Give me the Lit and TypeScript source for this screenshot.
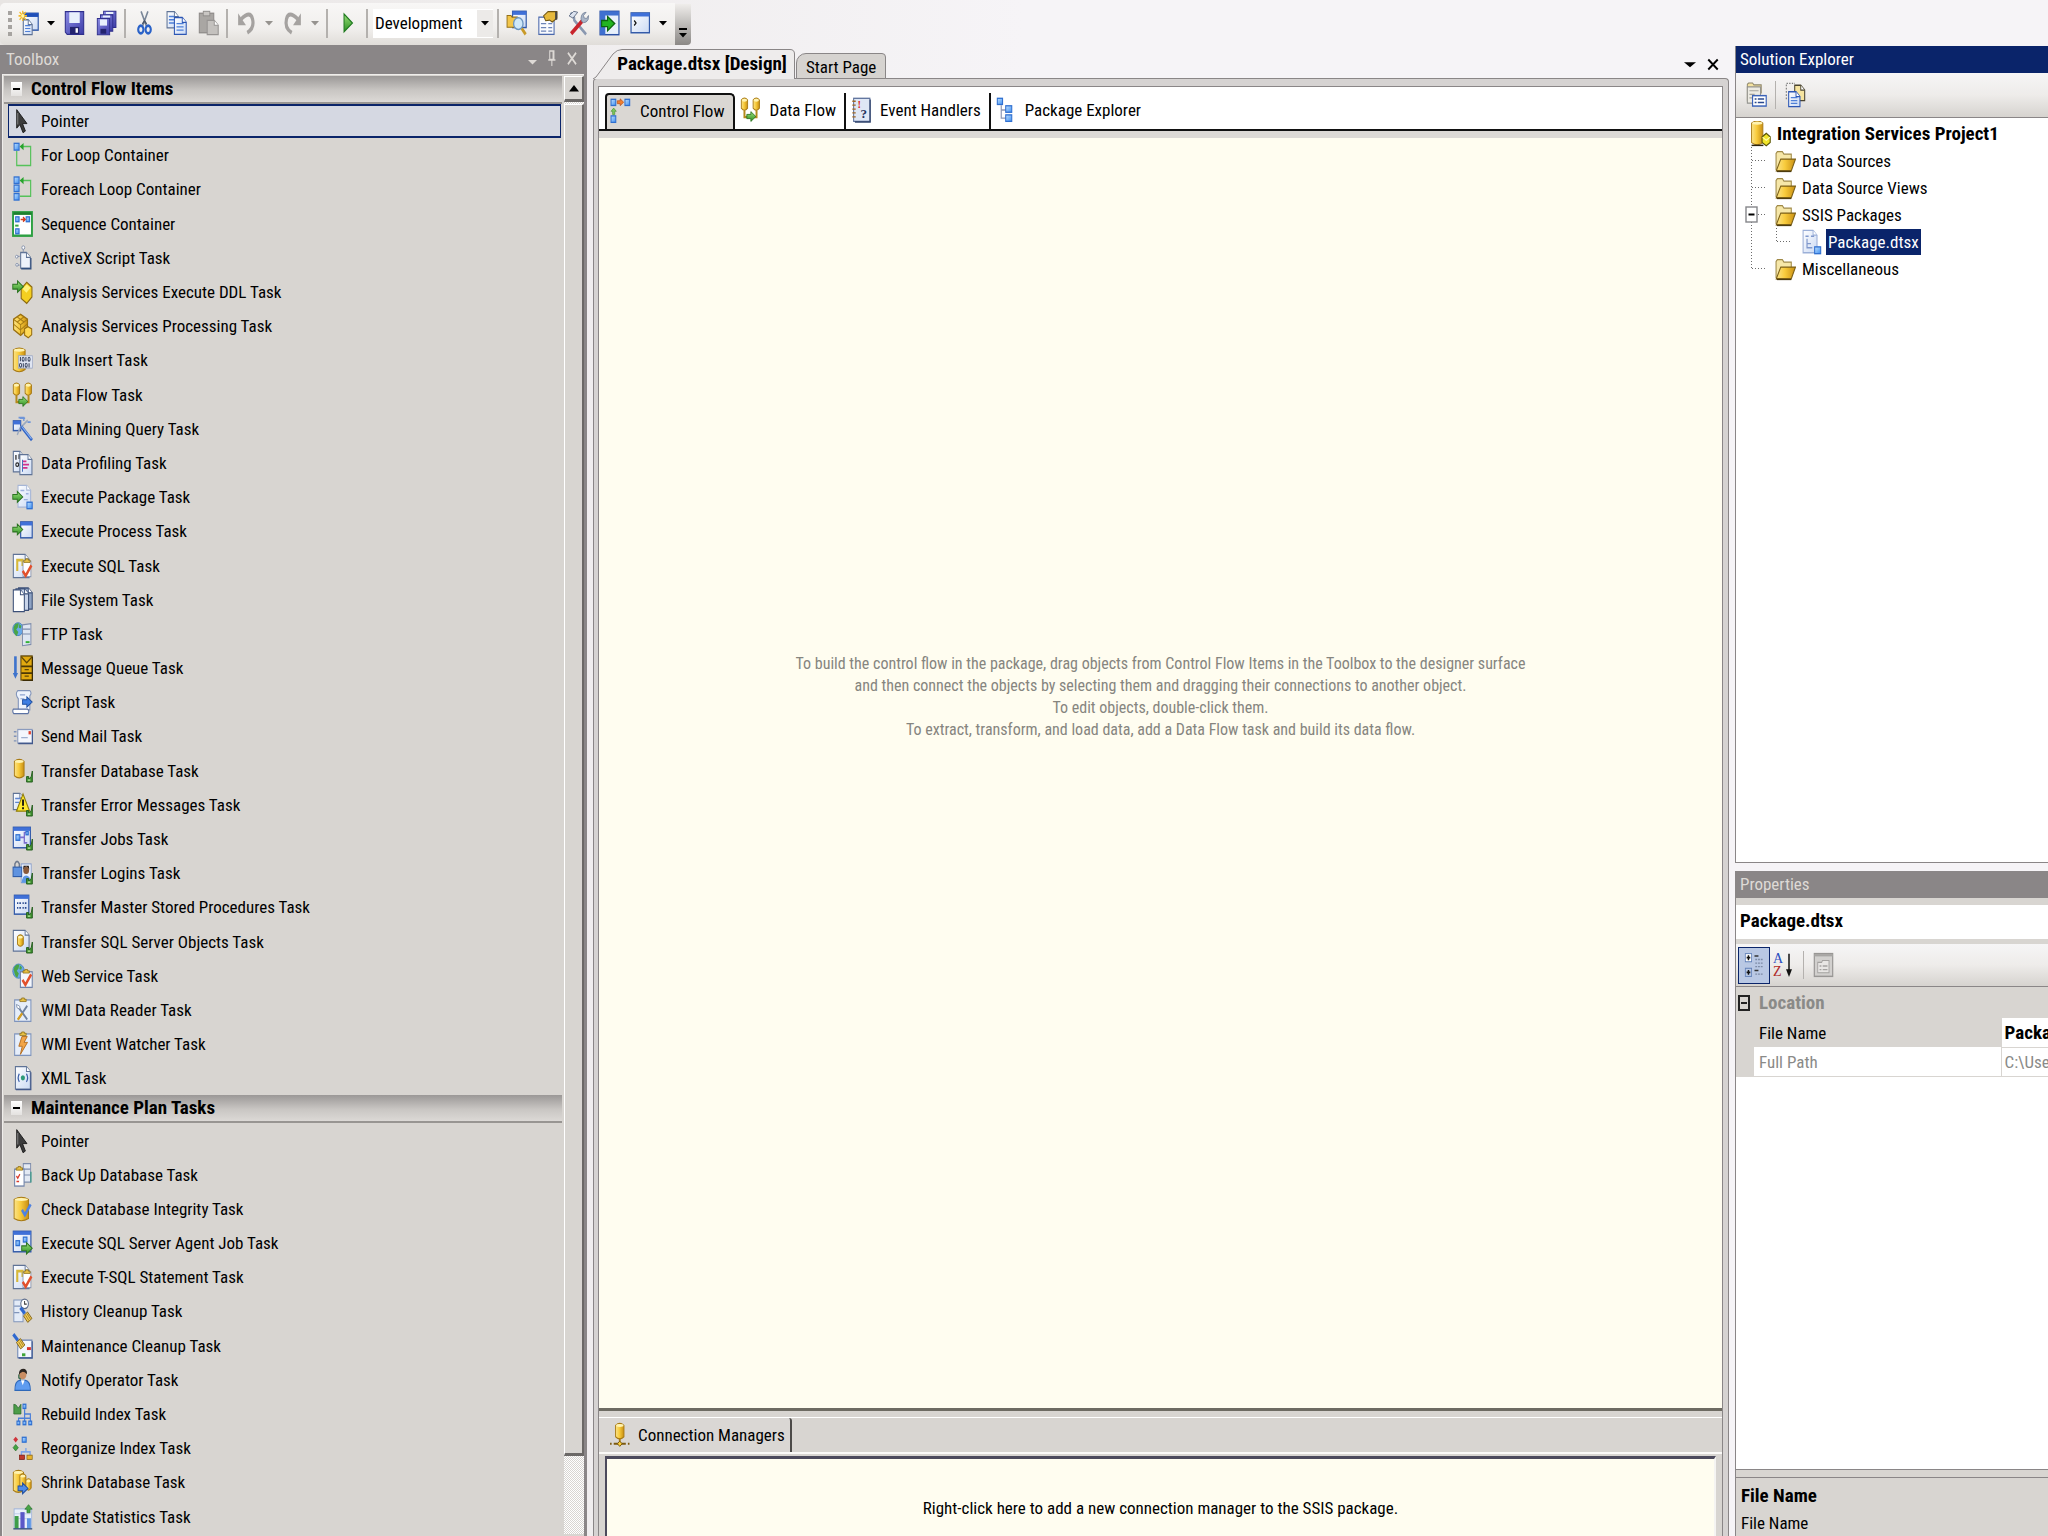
import { LitElement, html, css, svg, nothing } from 'lit';
import { customElement, property, state } from 'lit/decorators.js';
import { classMap } from 'lit/directives/class-map.js';

/* ---------- icon building blocks, drawn on a 16 x 16 grid ---------- */

const page = (x: number, y: number, w: number, h: number, fill = 'url(#paper)', edge = '#5f7396') => svg`
  <path d="M${x} ${y}h${w - 3}l3 3v${h - 3}h${-w}z" fill=${fill} stroke=${edge} stroke-width=".8"/>
  <path d="M${x + w - 3} ${y}v3h3" fill="#fff" stroke=${edge} stroke-width=".7"/>`;
const cyl = (x: number, y: number, w: number, h: number) => svg`
  <path d="M${x} ${y + 1.3}q${w / 2} -2.6 ${w} 0v${h - 2.6}q${-w / 2} 2.6 ${-w} 0z" fill="url(#gold)" stroke="#a87a14" stroke-width=".7"/>
  <ellipse cx=${x + w / 2} cy=${y + 1.4} rx=${w / 2 - 0.4} ry=".9" fill="#fff3b0"/>`;
const goArrow = (x: number, y: number, s = 1, fill = 'url(#green)', edge = '#2b7320') => svg`
  <path transform="translate(${x} ${y}) scale(${s})" d="M0 2h3.6v-2l4.4 3.5-4.4 3.5v-2h-3.6z" fill=${fill} stroke=${edge} stroke-width=".7"/>`;
const box = (x: number, y: number, w = 4, h = 4) => svg`
  <rect x=${x} y=${y} width=${w} height=${h} fill="url(#blue)" stroke="#2f6fd0" stroke-width=".8"/>`;
const tick = (x: number, y: number, c: string) => svg`
  <path d="M${x} ${y}l2.2 3 4.4-6.4" fill="none" stroke=${c} stroke-width="1.8"/>`;
const win = (x: number, y: number, w: number, h: number) => svg`
  <rect x=${x} y=${y} width=${w} height=${h} fill="url(#paper)" stroke="#3159a8" stroke-width=".9"/>
  <rect x=${x} y=${y} width=${w} height="2.2" fill="#3f70d8"/>`;
const moved = svg`
  <path d="M15.5 8v6.8h-4.4v-3.4h1.6v1.6l2-1.6z" fill="#3f8f30" stroke="#1f5a18" stroke-width=".6"/>
  <path d="M12 13.6h2" stroke="#b8ecA0" stroke-width=".8"/>`;
const clip = (x: number, y: number) => svg`
  <path d="M${x} ${y + 2.2}v-1.4l1.4 0v-.8h2v.8h1.4v1.4z" fill="#e7c045" stroke="#8a6a10" stroke-width=".5"/>`;
const brush = (x: number, y: number) => svg`
  <path d="M${x} ${y}l3.4 3.6" stroke="#2e68cf" stroke-width="2.2"/>
  <path d="M${x + 2.4} ${y + 5}l3-2.4 3.4 4-3.2 2.4z" fill="#f4cf58" stroke="#7a5a10" stroke-width=".6"/>
  <path d="M${x + 4} ${y + 4.6}l2.6 3.4M${x + 5} ${y + 3.6}l2.6 3.4" stroke="#8d6a18" stroke-width=".5"/>`;
const globe = (x: number, y: number, r: number) => svg`
  <circle cx=${x} cy=${y} r=${r} fill="#6aa8e8" stroke="#3a76b8" stroke-width=".5"/>
  <path d="M${x - r + 0.6} ${y - 1}q1-${r - 1} ${r} -${r - 1.4}l-.6 2.4-1.4 1.4 1.6 1.6-1.2 2.6q-2-1-2.4-4z" fill="#4aa546"/>
  <path d="M${x + 1} ${y - r + 0.8}l1.6 1.2-.6 1.6-1.4-.4z" fill="#4aa546"/>`;
const folder = svg`
  <path d="M.8 13.6V3.4l1-1.2h3.8l1.2 1.6h5.6v3.2" fill="#f6e7a8" stroke="#a08a48" stroke-width=".8"/>
  <path d="M1 14l3.4-7.2h11.2L12.4 14z" fill="url(#gold)" stroke="#7c6018" stroke-width=".8"/>
  <path d="M1.4 14.5h11" stroke="#4c3c10" stroke-width=".7"/>`;
const taskClip = svg`
  ${page(1, 0.8, 12, 14.4)}
  <path d="M4 11V4.4h4V8" fill="none" stroke="#d6b83a" stroke-width="1.6"/>
  <rect x="8.4" y="5" width="6" height="9.6" fill="#fff" stroke="#7d8cab" stroke-width=".6"/>
  ${clip(9, 3.6)}
  ${tick(8.2, 11, '#e2502c')}`;
const flowPair = svg`
  ${cyl(1, 0.6, 4.8, 7.6)}${cyl(10, 0.6, 4.8, 7.6)}
  <path d="M3.4 8.4v4h4M12.6 8.4v4h-2" fill="none" stroke="#b48a1c" stroke-width="1.5"/>
  ${goArrow(5.2, 9, 0.86)}`;

const drawings: Record<string, unknown> = {
  pointer: svg`<path d="M3.6 1v11.4l2.4-2.2 2.4 5 1.8-1-2.2-4.6h3.4z" fill="#3c3c3c" stroke="#151515" stroke-width=".6"/><path d="M4.4 3v7.2" stroke="#8a8a8a" stroke-width=".7"/>`,
  forLoop: svg`<path d="M3.6 5.6v8.8h10.6V2.8H8" fill="none" stroke="#55c25a" stroke-width=".9"/>${box(1.6, 0.8, 3.8, 4.2)}<path d="M5.8 2.8l3-2.2v4.4z" fill="#27a32c"/>`,
  forEach: svg`<path d="M6 12.4h8.2V2.8H8" fill="none" stroke="#55c25a" stroke-width=".9"/>${box(1.6, 0.6, 3.8, 4)}${box(1.6, 5.6, 3.8, 4)}${box(1.6, 10.8, 3.8, 4)}<path d="M5.8 2.8l3-2.2v4.4z" fill="#27a32c"/>`,
  sequence: svg`<rect x=".8" y=".8" width="14.4" height="14.4" fill="#fff" stroke="#2ea043" stroke-width="1.5"/><path d="M1 1.6h14" stroke="#1d7f2e" stroke-width="1.6"/>${box(2.8, 3.6, 2.6, 3)}${box(10.8, 3.6, 2.6, 3)}${box(2.8, 11, 2.6, 3)}<path d="M6.6 5.2h2.6M8.4 3.8l1.6 1.4-1.6 1.4" stroke="#d23c1e" stroke-width="1" fill="none"/><path d="M2.4 9h2.6" stroke="#3aa53f" stroke-width="1.2"/>`,
  activex: svg`${page(6.6, 4.6, 7.4, 9.6, '#eef3fb')}<path d="M8.6 4.4V1M3.2 7h2.6M3.2 12.4h2.6" stroke="#8b97ae" stroke-width=".8"/><circle cx="8.6" cy="1.6" r="1.1" fill="#fff" stroke="#7c8aa5" stroke-width=".6"/><circle cx="3.6" cy="7.2" r=".9" fill="#fff" stroke="#7c8aa5" stroke-width=".6"/><circle cx="3.8" cy="12.2" r=".9" fill="#fff" stroke="#7c8aa5" stroke-width=".6"/><path d="M14.4 8v6.6H7" stroke="#33507e" stroke-width=".9" fill="none"/>`,
  asDdl: svg`<path d="M11.2 2l4 3v6l-4 4-4.2-3V6z" fill="#f4cf20" stroke="#8c6a10" stroke-width=".8"/><path d="M8 6l3.2-2.6 3 2-3.2 3z" fill="#fff27a"/>${goArrow(0.6, 1.2, 1)}`,
  asProc: svg`<path d="M6.6.8l5.2 3v6l-5.2 4-5.4-3.6V3.8z" fill="url(#gold)" stroke="#9a7010" stroke-width=".9"/><path d="M1.4 4l5.2 3.2L11.6 4M6.6 7v6.4M1.4 7l5 3.4 5.2-3.6M4 2.4l5 3M9 2.4L4 5.6" stroke="#a77c14" stroke-width=".7" fill="none"/><path d="M9.6 9.6l2.6-1.2 2.8 1.4v3.6l-2.6 1.8-2.8-1.6z" fill="#ffd957" stroke="#9a7010" stroke-width=".8"/>`,
  bulk: svg`${cyl(1, 0.6, 9, 14.6)}<rect x="5" y="5.4" width="10.6" height="7.6" fill="#dfe5f2" stroke="#98a5c2" stroke-width=".5"/><path d="M6.4 6.2v2.6M10.6 6.2v2.6M8.6 10v2.6M13 10v2.6" stroke="#38445e" stroke-width=".8"/><g fill="none" stroke="#38445e" stroke-width=".7"><ellipse cx="8.5" cy="7.5" rx=".8" ry="1.2"/><ellipse cx="13" cy="7.5" rx=".8" ry="1.2"/><ellipse cx="6.5" cy="11.2" rx=".8" ry="1.2"/><ellipse cx="10.8" cy="11.2" rx=".8" ry="1.2"/></g>`,
  dataFlow: flowPair,
  mining: svg`${win(1, 3, 5.6, 6)}<path d="M6 1.4h4M5 1h4v2M11.8 3.8h2.4" stroke="#6f95d8" stroke-width="1" fill="none"/><path d="M4 11.6l2-4 6-5" stroke="#9ba9bf" stroke-width="1.1" fill="none"/><path d="M7 6.4l8.2 8.4" stroke="#2f62c4" stroke-width="2"/><path d="M7.4 6.4l7.4 7.6" stroke="#8fb4f0" stroke-width=".7"/>`,
  profiling: svg`${page(1, 0.8, 8, 12.6)}<path d="M3 3v3M5.4 2.6v3" stroke="#222" stroke-width=".9"/><circle cx="4" cy="9" r="1.1" fill="none" stroke="#222" stroke-width=".8"/>${page(6, 2.8, 9.2, 12.4)}<path d="M8 6v7.4" stroke="#3a66b8" stroke-width=".7"/><path d="M8.4 7h2.6M8.4 9h4.6M8.4 11h3.4" stroke="#d2308c" stroke-width="1.1"/>`,
  execPackage: svg`${page(4.6, 0.8, 9.6, 13.4, 'url(#paper)', '#a6b6d6')}<path d="M6.4 4h3M10.6 6h2M9 9.6h3" stroke="#9cb0dc" stroke-width=".8"/>${box(11.4, 11.2, 4, 4)}${goArrow(0.6, 4.6, 0.95)}`,
  execProcess: svg`${win(6.6, 2.4, 8.8, 9.8)}${goArrow(0.6, 3.8, 0.95)}`,
  taskClip,
  files: svg`${page(5, 0.6, 10.4, 13, '#8fa3c4', '#3c5078')}${page(3, 1.2, 9.6, 13.2, '#c9d5ea', '#3c5078')}${page(1, 1.8, 8.4, 13.4, '#fff', '#3c5078')}`,
  ftp: svg`${globe(4.6, 5, 4)}<path d="M8 2.4l6.4-.8v12.8l-6.4.8z" fill="#dfe6f2" stroke="#7d8cab" stroke-width=".7"/><path d="M8 5h6M8 8h6" stroke="#7d8cab" stroke-width=".7"/><path d="M10.4 13h3" stroke="#35b335" stroke-width="1.2"/>`,
  queue: svg`<path d="M2.6.8v11" stroke="#3f74cc" stroke-width="2"/><path d="M.6 11h4l-2 3.6z" fill="#3f74cc"/><rect x="6.8" y=".6" width="8.6" height="14.8" fill="#e1a90f" stroke="#5f4607" stroke-width=".8"/><path d="M7 7h8.4M7 11.2h8.4" stroke="#4c3805" stroke-width="1.1"/><path d="M7.2 1.2l4 3.6 4-3.6M9.6 9h3.2M9.6 13h3.2" stroke="#5f4607" stroke-width=".9" fill="none"/><path d="M15.6 1v14.6H8" stroke="#3c2c04" stroke-width=".8" fill="none"/>`,
  script: svg`<path d="M4.4 1h9.2q1.8 1.6 0 3.2v8.6H4.8V6Q2 3 4.4 1z" fill="#eef3fc" stroke="#7f92b8" stroke-width=".8"/><path d="M1 12.4h11q1.6 1.4 0 2.8H1.4q-1.4-1.2-.4-2.8z" fill="#fff" stroke="#5c73a4" stroke-width=".8"/><path d="M6 3.6h4M6.4 6h3" stroke="#8ea4d0" stroke-width=".7"/>${goArrow(8, 4.8, 0.92, '#3f7fe4', '#1f4fa0')}`,
  mail: svg`<rect x="4.4" y="4" width="11" height="8.4" fill="#f4f7fd" stroke="#8b9bbd" stroke-width=".8"/><path d="M4.8 12.6h10.8V4.4" stroke="#42598c" stroke-width=".9" fill="none"/><rect x="12.6" y="5" width="1.8" height="2" fill="#e0402c"/><path d="M7 9h5" stroke="#9fb0d0" stroke-width=".8"/><path d="M1.4 5.4h2M1.4 8.2h2M1.4 11h2" stroke="#7f92b8" stroke-width=".9"/>`,
  xDatabase: svg`${cyl(1.8, 0.8, 7.4, 11.4)}${moved}`,
  xErrors: svg`${page(1, 0.8, 8, 10)}<path d="M2.4 4h4M2.4 6.4h3" stroke="#5f86d0" stroke-width=".8"/><path d="M8.4 1.2l5 10.600H3.400z" fill="#ffe92e" stroke="#8f7c08" stroke-width=".8"/><path d="M8.400 4.600v3.800M8.400 9.400v1.200" stroke="#111" stroke-width="1.4"/>${moved}`,
  xJobs: svg`${win(1, 0.8, 13, 12.6)}${box(3, 5.4, 3, 3.4)}<path d="M6 7h3.4M11.6 4H9.4v6.4h2.2" fill="none" stroke="#7a6fd0" stroke-width="1"/>${box(10.6, 3.4, 1.8, 2)}${moved}`,
  xLogins: svg`<rect x="7" y="2.4" width="7.6" height="11.6" fill="#eaf1fc" stroke="#8098c8" stroke-width=".6"/><circle cx="10.8" cy="6.4" r="2.2" fill="#8a5a3a"/><path d="M8.4 6q2.4-4 4.8 0l-.4-2.4h-4z" fill="#2a1c14"/><path d="M7.4 14q.4-4.4 3.4-4.4t3.6 4.4z" fill="#5d98e6"/><path d="M2.2 4.4V2.4q1.6-3.2 3.4 0v2" fill="none" stroke="#6f7a8c" stroke-width="1.1"/><rect x=".8" y="4.4" width="6.6" height="5.8" fill="#5f93e0" stroke="#2f5ca8" stroke-width=".7"/>${moved}`,
  xProcs: svg`${win(1.8, 0.8, 11, 11.6)}<path d="M3.8 5.6h3M8 5.6h3M3.8 8.6h3M8 8.6h3" stroke="#2a4a90" stroke-width="1.1" stroke-dasharray="1 .8 3 .6"/>${moved}`,
  xObjects: svg`${page(1, 0.8, 12, 12.8)}${cyl(4.2, 3.6, 4.4, 7)}${moved}`,
  web: svg`${globe(5, 5, 4.4)}<rect x="6.4" y="5.4" width="9" height="9.6" fill="#f4f7fd" stroke="#6f82a8" stroke-width=".8"/>${clip(8.4, 4)}${tick(8, 10.4, '#e2502c')}`,
  wmiRead: svg`<rect x="2" y="1.8" width="12.4" height="13.2" fill="#e6eefa" stroke="#7f94bc" stroke-width=".8"/>${clip(6, 0.6)}<path d="M4 5.4l7.6 8.4M11.6 5.4l-7 8.4" stroke="#6f82a0" stroke-width="1.3"/><path d="M4.4 14l3.4-4" stroke="#d8a020" stroke-width="1.6"/><path d="M3.4 4.6l2.4 1 .4 2-2.4-1z" fill="#fff" stroke="#6f82a0" stroke-width=".5"/>`,
  wmiWatch: svg`<rect x="2" y="1.8" width="12.4" height="13.2" fill="#e6eefa" stroke="#7f94bc" stroke-width=".8"/>${clip(6, 0.6)}<path d="M7.6 3.4h4l-2.4 3.6h2.6L6.4 14.4l1.4-5H5.2z" fill="#f2a548" stroke="#b06a1c" stroke-width=".6"/>`,
  xml: svg`${page(2.6, 1, 11.4, 13.8)}<path d="M14.4 4.4v10.8H3" stroke="#42598c" stroke-width=".8" fill="none"/><path d="M5.6 5.4Q3.8 7.8 5.6 10.4M11 5.4Q12.8 7.8 11 10.4" fill="none" stroke="#3b5fa8" stroke-width=".9"/><circle cx="8.3" cy="7.9" r="1.6" fill="#2c9a78"/>`,
  backup: svg`<path d="M8.6 1h5.6v11.4H8.6z" fill="#e3e9f3" stroke="#7d8cab" stroke-width=".7"/><path d="M9 4.4h5M9 8h5" stroke="#7d8cab" stroke-width=".7"/><path d="M14.4 6v6.6" stroke="#3f9a8a" stroke-width="1"/><rect x="2" y="4.4" width="7.2" height="10.4" fill="#fff" stroke="#6f82a8" stroke-width=".8"/>${clip(3.2, 2.8)}<path d="M3.4 8.6l1 1.4 1.6-2.6M3.4 12h2" fill="none" stroke="#d83a2a" stroke-width=".9"/>`,
  checkDb: svg`${cyl(1.6, 0.8, 11, 14.4)}${tick(7.6, 8.6, '#4f82e0')}`,
  agentJob: svg`${win(1, 0.8, 13.4, 12.6)}${box(3, 6.6, 2.8, 3)}${box(8.6, 4.4, 2.8, 3)}${goArrow(7.4, 7.8, 1)}`,
  history: svg`<path d="M1.4 1.2h7v13.4h-7z" fill="#e3ebf7" stroke="#8095bb" stroke-width=".7"/><path d="M1.6 5h5M1.6 9h4" stroke="#8095bb" stroke-width=".7"/><circle cx="9.6" cy="3.6" r="2.9" fill="#fff" stroke="#5c6c8c" stroke-width=".8"/><path d="M9.6 1.8v2h1.6" stroke="#333" stroke-width=".7" fill="none"/>${brush(6.4, 6)}`,
  cleanup: svg`<rect x="4.4" y="4.4" width="10.8" height="10.8" fill="#f2f6fd" stroke="#6f86b4" stroke-width=".8"/><path d="M15.4 5v10.4H5" stroke="#3f5a94" stroke-width=".9" fill="none"/>${brush(1, 0.8)}<path d="M11.4 9.6h3" stroke="#d8342c" stroke-width="1.8"/><path d="M7.6 13.4h2.6" stroke="#3fa53a" stroke-width="1.8"/>`,
  operator: svg`<path d="M2.2 14.4q0-5.8 3.6-6.2h4.4q3.8.4 3.8 6.2z" fill="#5f9cf0" stroke="#2f68b8" stroke-width=".7"/><path d="M6.8 8.2l1.4 3 1.4-3z" fill="#fff"/><circle cx="8.2" cy="4.8" r="2.8" fill="#c98d62"/><path d="M5.2 5q-.2-4 3.2-4t3 3.4q-2-1.6-3.6-1.4T5.2 5z" fill="#2a2420"/><path d="M5.2 4.6v2l1.6 1" stroke="#3a6a50" stroke-width="1" fill="none"/>`,
  rebuild: svg`<path d="M1.4 2v6h5.4V2l-2 2.4L3 2.4z" fill="#4c9c48" stroke="#28682a" stroke-width=".5"/><path d="M9.6 5v3M5 12.6v-2h9v2M9.6 8v4.4M9.6 8h4.4v4" fill="none" stroke="#4c80d8" stroke-width=".9"/>${box(8.4, 2, 2.2, 2.6)}${box(3.8, 12.4, 2.2, 2.2)}${box(8.4, 12.4, 2.2, 2.2)}${box(12.8, 12.4, 2.2, 2.2)}`,
  reorganize: svg`<path d="M2.8 1l1.8 1.8L2.8 4.6 1 2.8z" fill="#d0343c"/><path d="M2.8 5.8l2 2-2 2-2-2z" fill="#43a543" stroke="#246a24" stroke-width=".4"/>${box(7.8, 1.4, 3, 3)}<path d="M10.6 8v2.4M7.2 12.4v-2h6.6v2" fill="none" stroke="#7da4e8" stroke-width="1"/><rect x="5.6" y="12.4" width="4" height="2.6" fill="#c23a2c" stroke="#7a1c14" stroke-width=".5"/><rect x="11.4" y="12.4" width="4" height="2.6" fill="#e8b42c" stroke="#8a6410" stroke-width=".5"/>`,
  shrink: svg`${cyl(1, 0.8, 7.8, 13.6)}${cyl(6, 3, 4.6, 9)}${cyl(10.6, 6, 4, 7)}${goArrow(4.6, 8.6, 0.95, '#4f8ce8', '#1f4fa0')}`,
  stats: svg`<rect x="1.6" y="3" width="13.4" height="12" fill="#e9f0fa" stroke="#9cb2d8" stroke-width=".6"/><path d="M1.6 6h13M1.6 9h13" stroke="#b4c6e4" stroke-width=".5"/><rect x="2" y="7.4" width="3" height="7.8" fill="#3f9d48"/><rect x="6.4" y="5" width="3.2" height="10.2" fill="#5b58c8"/><rect x="11.4" y="8.8" width="3" height="6.4" fill="#5f96e4"/><path d="M1 15.3h14.4" stroke="#35507c" stroke-width=".8"/><path d="M12.6.4l2.8 2.8h-1.6v2.2h-2.4V3.2H9.8z" fill="#47a545" stroke="#206420" stroke-width=".4"/>`,

  controlFlow: svg`${box(0.8, 0.8, 3.6, 3.8)}${box(11.4, 0.8, 3.6, 3.8)}${box(0.8, 11, 3.6, 4)}${goArrow(5.6, 0.5, 0.6, '#f08030', '#b04010')}<path d="M.8 8.2l2-2 2 2h-1.2v2H2v-2z" fill="#7cc85c" stroke="#3f8a2c" stroke-width=".4"/>`,
  events: svg`<rect x="2" y=".8" width="12.4" height="14.2" fill="#dfe7f5" stroke="#5d719c" stroke-width=".8"/><path d="M14.6 1.6v13.8H3" stroke="#33466e" stroke-width="1" fill="none"/><path d="M1 2.6h2.6M1 5h2.6M1 7.4h2.6M1 9.8h2.6M1 12.2h2.6" stroke="#a06828" stroke-width=".8"/>`,
  explorer: svg`<path d="M4 5v8h4M4 8h4" fill="none" stroke="#8d97b4" stroke-width=".9"/>${box(1, 0.8, 4, 3.8)}${box(7.4, 5.4, 4.6, 4)}${box(7.4, 11, 4.6, 4)}`,
  connection: svg`${cyl(5, 0.8, 6.4, 9.6)}<path d="M8.2 10v3" stroke="#a87a14" stroke-width="1.4"/><path d="M.8 13.4h1.2M3.6 13.4h9.2M14.4 13.4h1.2" stroke="#7c5a10" stroke-width="1.3"/><path d="M8.2 11.8l1.8 1.6-1.8 1.6-1.8-1.6z" fill="#ffd23a" stroke="#6b4c08" stroke-width=".6"/>`,

  newProject: svg`${win(4.4, 2, 11, 10.4)}<rect x="4.4" y="2" width="11" height="2.2" fill="#1f4fb8"/>${page(4, 6, 6.8, 9.2)}<path d="M5.4 9.6h4M5.4 11.4h4M5.4 13.2h4" stroke="#4f80d8" stroke-width=".7"/><path d="M3.6.4v6.4M.4 3.6h6.4M1.2 1.2L6 6M6 1.2L1.2 6" stroke="#f4b928" stroke-width="1"/><circle cx="3.6" cy="3.6" r="1.2" fill="#fff6a8"/>`,
  save: svg`<path d="M1 1h14v14H2.4L1 13.6z" fill="url(#indigo)" stroke="#2f2f8c" stroke-width=".8"/><rect x="4" y="1.4" width="8" height="6.6" fill="#e8f0fc"/><rect x="4.6" y="10.4" width="7" height="4.4" fill="#23236e"/><rect x="8.8" y="11.2" width="1.8" height="2.8" fill="#fff"/>`,
  saveAll: svg`<g stroke="#2f2f8c" stroke-width=".7"><path d="M5.8.8h9.4v10H5.8z" fill="url(#indigo)"/><path d="M3.4 3h9.4v10H3.4z" fill="url(#indigo)"/><path d="M1 5.2h9.4v10H1z" fill="url(#indigo)"/></g><path d="M7.6 1.2h5.6v1.2H7.6zM5.2 3.4h5.6v1.2H5.2z" fill="#e8f0fc"/><rect x="3" y="5.8" width="5.4" height="3.8" fill="#e8f0fc"/><rect x="3.4" y="11.6" width="4.4" height="3" fill="#23236e"/>`,
  cut: svg`<path d="M5.4.8l4 9M10.6.8l-4 9" stroke="#7a8698" stroke-width="1.2"/><path d="M6.4 8.6l1.6-2 1.6 2" stroke="#4a5668" stroke-width="1" fill="none"/><ellipse cx="5.2" cy="12" rx="2" ry="2.4" fill="none" stroke="#2a62c8" stroke-width="1.6"/><ellipse cx="10.8" cy="12" rx="2" ry="2.4" fill="none" stroke="#2a62c8" stroke-width="1.6"/>`,
  copy: svg`${page(0.8, 1, 8.6, 10)}<path d="M2.2 4h4M2.2 6h5M2.2 8h5" stroke="#4f80d8" stroke-width=".8"/>${page(6.4, 4.6, 9, 10.4, 'url(#paper)', '#2c56b4')}<path d="M8 8.4h5.4M8 10.4h5.4M8 12.4h5.4" stroke="#4f80d8" stroke-width=".8"/>`,
  paste: svg`<rect x="1" y="2" width="11" height="12" fill="#a9a6a3" stroke="#8f8c8a" stroke-width=".8"/><rect x="4" y=".8" width="5" height="2.8" fill="#c9c6c3" stroke="#8f8c8a" stroke-width=".6"/>${page(7, 6.4, 8.4, 8.8, '#c4c1be', '#979492')}`,
  undo: svg`<path d="M4 5.6Q11 0 12.600 5.600T8.600 14" fill="none" stroke="#a5a2a0" stroke-width="2.4"/><path d="M1.600 2v7.400h6z" fill="#a5a2a0"/>`,
  redo: svg`<path d="M12 5.600Q5 0 3.400 5.600T7.400 14" fill="none" stroke="#a5a2a0" stroke-width="2.400"/><path d="M14.400 2v7.400h-6z" fill="#a5a2a0"/>`,
  play: svg`<path d="M4.6 2.4v11L11 8z" fill="url(#green)" stroke="#1f7a1f" stroke-width=".8"/>`,
  find: svg`${win(5, 0.8, 10.4, 10)}<path d="M.8 10.6V3.4h3l.8 1h4v6.2z" fill="#f3c64a" stroke="#94701a" stroke-width=".7"/><circle cx="9.4" cy="8.4" r="3.6" fill="#cfe8f8" stroke="#6a94c0" stroke-width="1"/><path d="M12 11.4l3 3.6" stroke="#c99a28" stroke-width="2"/>`,
  properties: svg`<rect x="1.4" y="4.4" width="11.6" height="10.6" fill="#fafbfe" stroke="#4a68ac" stroke-width=".8"/><path d="M3 8.4h4M8.6 8.4h3M3 10.8h4M8.6 10.8h3M3 13h4M8.6 13h3" stroke="#6c84b8" stroke-width=".8"/><path d="M5 3.6L8.4 1h6.8v4l-3.6 2.4-2-1.2-3 .4z" fill="#e6b93c" stroke="#6f5410" stroke-width=".7"/><path d="M13.8 1h1.6v5h-1.6z" fill="#444"/>`,
  tools: svg`<path d="M2 1.6l2.6 3 .2 1.8L13.8 15" fill="none" stroke="#8a98b0" stroke-width="1.8"/><path d="M10.8 6.8L2.4 14.6" stroke="#c8242c" stroke-width="2.6"/><path d="M13.8 1.4l-2 2 .6 1.6 1.8.2 1.4-1.8q.4 3-1.8 4t-3.4-.4q-1-2 0-3.8t3.4-1.8z" fill="#aab6c8" stroke="#6a7890" stroke-width=".5"/><path d="M.8 3.6L4.4.8l3 .6-3.6 3.6z" fill="#dbe2ee" stroke="#5a6880" stroke-width=".6"/>`,
  objects: svg`<rect x=".8" y=".8" width="14.4" height="14.4" fill="#e8f0fc" stroke="#2a50a4" stroke-width=".9"/><rect x=".8" y=".8" width="14.4" height="2.6" fill="#3f70d0"/><rect x=".8" y=".8" width="4" height="14.4" fill="#3f70d0"/>${goArrow(2, 4, 1.25, '#22b422', '#0e6410')}`,
  command: svg`${win(0.8, 1.8, 14, 12.2)}<path d="M3.2 6.4l1.4 1.6-1.4 1.6" fill="none" stroke="#111" stroke-width=".9"/>`,

  solProps: svg`<path d="M1 12V1.4l1-.8h3l1 1.2h5.6V7" fill="#f4e2a0" stroke="#8c8468" stroke-width=".7"/><rect x="1" y="3" width="10" height="10" fill="#eceae2" stroke="#8c8c88" stroke-width=".7"/><path d="M2.6 5.4h7M2.6 7.6h4M2.6 9.8h3" stroke="#a4a29c" stroke-width=".7"/><rect x="5" y="8.4" width="10.4" height="6.4" fill="#fff" stroke="#3a62b8" stroke-width=".9"/><path d="M6.6 10.4h1.4M9 10.4h4.8M6.6 12.6h1.4M9 12.6h4.8" stroke="#2a4a90" stroke-width=".9"/>`,
  solFiles: svg`<path d="M1 10.6V.8h6.6" fill="none" stroke="#777" stroke-width=".8" stroke-dasharray="1 1"/>${page(7.4, 2, 7.6, 9.4, '#f6e4a0', '#4a4430')}${page(2.8, 6, 8.6, 9.2, 'url(#paper)', '#2c56b4')}<path d="M4.4 9.6h5M4.4 11.4h5M4.4 13.2h5" stroke="#4f80d8" stroke-width=".8"/>`,
  project: svg`${cyl(1.2, 0, 8.6, 14.6)}<path d="M1.2 15h9" stroke="#2c2410" stroke-width=".9"/><path d="M12.400 7.600l3 2.200v3.400l-3 2-3.200-2v-3.400z" fill="#f0e428" stroke="#5a5408" stroke-width=".8"/><path d="M9.600 10l2.800 1.800 2.800-1.800" fill="none" stroke="#fffcae" stroke-width=".8"/>`,
  folder,
  package: svg`${page(1.6, 0.8, 10.6, 13.8, 'url(#paper)', '#9cb0d8')}<path d="M3.4 4.4h2.4M7.6 4.4h2.4M4.6 6v3h3M4.6 9v2.6h4" fill="none" stroke="#8098cc" stroke-width=".9"/>${box(10.4, 11, 4.6, 4.2)}`,
  categories: svg`<rect x="1" y="1" width="4.8" height="5" fill="#fff" stroke="#5f7fb8" stroke-width=".6"/><path d="M3.4 2v3M2 3.5h2.8M3.4 11v3M2 12.5h2.8" stroke="#111" stroke-width="1.1"/><rect x="1" y="10" width="4.8" height="5" fill="none" stroke="#5f7fb8" stroke-width=".6"/><path d="M8 2.4h3M8 11.4h3" stroke="#333" stroke-width=".9"/><path d="M8.6 4.6h6M8.6 6.8h6M8.6 9h6M8.6 13.6h6" stroke="#7d8ba6" stroke-width=".8" stroke-dasharray="1.4 .7"/>`,
  sortArrow: svg`<path d="M8 1v11" stroke="#111" stroke-width="2"/><path d="M4 10.600h8L8 15.400z" fill="#111"/>`,
  propPages: svg`<rect x="1" y="1" width="14" height="14" fill="#d2d0ce" stroke="#989694" stroke-width=".9"/><path d="M1 2h14" stroke="#a8a6a4" stroke-width="1.4"/><path d="M3.6 6.4h3l.6-1.2h5v7.6H3.6z" fill="#e8e6e4" stroke="#a4a2a0" stroke-width=".7"/><path d="M5 8.6h1.4M7.4 8.6h3.6M5 10.8h1.4M7.4 10.8h3.6" stroke="#a4a2a0" stroke-width=".8"/>`,
  pin: svg`<path d="M5 1h5.6v8H5zM3 9.4h9.6M7.8 9.4V15M9.4 1v8" fill="none" stroke="currentColor" stroke-width="1.4"/>`,
  close: svg`<path d="M2.6 2.6l10.8 10.8M13.4 2.6L2.6 13.4" stroke="currentColor" stroke-width="2.2"/>`,
  caret: svg`<path d="M0 4h16L8 13z" fill="currentColor"/>`,
  up: svg`<path d="M0 12.400h16L8 2.800z" fill="currentColor"/>`,
};

const glyphs: Record<string, unknown> = {
  events: svg`<text x="5" y="8.4" font-size="8" font-weight="bold" fill="#d22" font-family="Liberation Serif, serif">!</text>
    <text x="7.2" y="16.4" font-size="10" font-weight="bold" fill="#26345e" font-family="Liberation Serif, serif">?</text>`,
};

@customElement('ide-icon')
export class IdeIcon extends LitElement {
  @property() name = '';

  static styles = css`
    :host { display: block; flex: none; width: 21px; height: 26px; }
    svg { display: block; width: 100%; height: 100%; }
  `;

  render() {
    return html`<svg viewBox="0 0 16 20" preserveAspectRatio="none" aria-hidden="true">
      <defs>
        <linearGradient id="gold"><stop offset="0" stop-color="#fbe48a"/><stop offset=".45" stop-color="#f8cb3c"/><stop offset="1" stop-color="#c98f12"/></linearGradient>
        <linearGradient id="blue" x2="1" y2="1"><stop offset="0" stop-color="#bfe0ff"/><stop offset="1" stop-color="#3f8ff0"/></linearGradient>
        <linearGradient id="paper" x2="1" y2="1"><stop offset="0" stop-color="#fff"/><stop offset="1" stop-color="#cbdaf4"/></linearGradient>
        <linearGradient id="green" x2="0" y2="1"><stop offset="0" stop-color="#9be07a"/><stop offset="1" stop-color="#2b8f22"/></linearGradient>
        <linearGradient id="indigo" x2="1" y2="1"><stop offset="0" stop-color="#8c8ce4"/><stop offset="1" stop-color="#3c3ca8"/></linearGradient>
      </defs>
      <g transform="scale(1 1.25)">${drawings[this.name] ?? nothing}</g>
      ${glyphs[this.name] ?? nothing}
    </svg>`;
  }
}

type Item = [icon: string, label: string];

const groups: { title: string; items: Item[] }[] = [
  {
    title: 'Control Flow Items',
    items: [
      ['pointer', 'Pointer'],
      ['forLoop', 'For Loop Container'],
      ['forEach', 'Foreach Loop Container'],
      ['sequence', 'Sequence Container'],
      ['activex', 'ActiveX Script Task'],
      ['asDdl', 'Analysis Services Execute DDL Task'],
      ['asProc', 'Analysis Services Processing Task'],
      ['bulk', 'Bulk Insert Task'],
      ['dataFlow', 'Data Flow Task'],
      ['mining', 'Data Mining Query Task'],
      ['profiling', 'Data Profiling Task'],
      ['execPackage', 'Execute Package Task'],
      ['execProcess', 'Execute Process Task'],
      ['taskClip', 'Execute SQL Task'],
      ['files', 'File System Task'],
      ['ftp', 'FTP Task'],
      ['queue', 'Message Queue Task'],
      ['script', 'Script Task'],
      ['mail', 'Send Mail Task'],
      ['xDatabase', 'Transfer Database Task'],
      ['xErrors', 'Transfer Error Messages Task'],
      ['xJobs', 'Transfer Jobs Task'],
      ['xLogins', 'Transfer Logins Task'],
      ['xProcs', 'Transfer Master Stored Procedures Task'],
      ['xObjects', 'Transfer SQL Server Objects Task'],
      ['web', 'Web Service Task'],
      ['wmiRead', 'WMI Data Reader Task'],
      ['wmiWatch', 'WMI Event Watcher Task'],
      ['xml', 'XML Task'],
    ],
  },
  {
    title: 'Maintenance Plan Tasks',
    items: [
      ['pointer', 'Pointer'],
      ['backup', 'Back Up Database Task'],
      ['checkDb', 'Check Database Integrity Task'],
      ['agentJob', 'Execute SQL Server Agent Job Task'],
      ['taskClip', 'Execute T-SQL Statement Task'],
      ['history', 'History Cleanup Task'],
      ['cleanup', 'Maintenance Cleanup Task'],
      ['operator', 'Notify Operator Task'],
      ['rebuild', 'Rebuild Index Task'],
      ['reorganize', 'Reorganize Index Task'],
      ['shrink', 'Shrink Database Task'],
      ['stats', 'Update Statistics Task'],
    ],
  },
];

const views: Item[] = [
  ['controlFlow', 'Control Flow'],
  ['dataFlow', 'Data Flow'],
  ['events', 'Event Handlers'],
  ['explorer', 'Package Explorer'],
];

const guide = (kind: 'tee' | 'end' | 'open') => html`<svg class="guide" viewBox="0 0 30 27" aria-hidden="true">
  <path d="M6.5 0V${kind === 'end' ? 14 : 27}M7 13.5H21" fill="none" stroke="#6c6c6c" stroke-dasharray="1 2"/>
  ${kind === 'open' ? svg`<rect x="1" y="6" width="11" height="15" fill="#fff" stroke="#85868a" stroke-width="1.4"/><path d="M3.5 13.5h6" stroke="#000" stroke-width="2"/>` : nothing}
</svg>`;

@customElement('app-root')
export class AppRoot extends LitElement {
  @state() private picked = '0-0';
  @state() private view = 0;

  static styles = css`
    :host {
      display: block;
      font: 17px/22px 'Roboto Condensed', Roboto, 'Liberation Sans', sans-serif;
      color: #000;
      --face: #d8d5d1;
      --edge: #8a8687;
      --navy: #0a246a;
      --cream: #fffdf0;
    }
    * { box-sizing: border-box; }
    button, select { font: inherit; color: inherit; }
    button { border: 0; padding: 0; margin: 0; background: none; display: flex; align-items: center; justify-content: center; text-align: left; white-space: nowrap; }
    ul { list-style: none; margin: 0; padding: 0; }
    h2, h3, p { margin: 0; font-size: inherit; font-weight: inherit; }
    b, .strong { font-size: 19px; font-weight: 700; }

    .shell { display: flex; flex-direction: column; height: 100vh; overflow: hidden; background: linear-gradient(90deg, #e8e5e3, #f6f4f7 50%, #f6f4f7); }

    .toolbar { display: flex; align-items: center; align-self: flex-start; flex: none; height: 45px; }
    .strip { display: flex; align-items: center; height: 42px; margin-top: 3px; padding: 0 5px 2px 8px; border-radius: 5px 0 0 5px; background: linear-gradient(#f8f7f6, #f1efed 60%, #e0ddd9); }
    .grip { width: 4px; height: 25px; background: repeating-linear-gradient(#a6a3a0 0 4px, transparent 4px 7px); }
    .tool { width: 32px; height: 36px; }
    .windows { display: flex; }
    .windows .tool { width: 31px; }
    .drop { width: 14px; height: 36px; }
    .drop ide-icon, .mini { width: 8px; height: 8px; }
    .dim { color: #96938f; }
    .rule { width: 2px; height: 29px; margin: 0 2px; background: #b4b1ae; }
    .rule.wide { margin: 0 4px; }
    .combo { display: grid; grid-template-columns: 104px 16px; align-items: center; margin: 0 2px 0 3px; height: 29px; background: #fff; }
    .combo select { grid-area: 1 / 1 / 2 / 3; height: 29px; padding: 0 0 0 2px; border: 0; background: none; appearance: none; }
    .combo span { grid-area: 1 / 2; height: 27px; display: flex; align-items: center; justify-content: center; background: #eceae8; pointer-events: none; }
    .more { align-self: flex-end; flex-direction: column; gap: 1px; width: 16px; height: 41px; padding-top: 18px; background: linear-gradient(#efedeb, #8b8885); border-radius: 0 0 4px 0; }
    .more i { width: 8px; height: 2px; background: #000; }

    .main { flex: 1; min-height: 0; display: grid; grid-template-columns: 587px minmax(0, 1fr) 313px; gap: 6px; }

    .toolbox { display: flex; flex-direction: column; min-height: 0; background: var(--edge); }
    .title { display: flex; align-items: center; flex: none; height: 29px; padding: 0 5px 2px 6px; color: #dedad6; background: var(--edge); }
    .title h2 { flex: 1; }
    .title button { width: 20px; height: 20px; }
    .title ide-icon { width: 12px; height: 17px; }
    .title .mini { width: 9px; height: 8px; margin-top: 6px; }
    .body { flex: 1; min-height: 0; display: flex; gap: 2px; margin: 0 3px 0 2px; padding: 1px 0 2px 1px; border: solid #efedeb; border-width: 1px 0 0 1px; background: var(--face); }
    .palette { flex: 1; display: flex; flex-direction: column; min-width: 0; }
    .palette ul { display: contents; }
    .palette li { flex: 1 1 34px; display: flex; min-height: 0; padding: 0 1px 0 4px; }
    .group { flex: none; height: 28px; display: flex; border-bottom: 2px solid #989592; background: linear-gradient(#9b9897, #c9c6c3 55%, #dcd9d6); }
    .group button { gap: 9px; padding-left: 7px; }
    .minus { display: flex; align-items: center; justify-content: center; width: 11px; height: 14px; background: linear-gradient(#fff, #e4e2e0); }
    .minus::before { content: ''; width: 7px; height: 2px; background: #000; }
    .item { flex: 1; justify-content: flex-start; gap: 8px; padding-left: 3px; border: 1px solid transparent; }
    .item.picked { border-color: var(--navy); border-width: 2px 1px; background: #d5d8e2; }
    .scroll { flex: none; width: 20px; display: flex; flex-direction: column; gap: 2px; background: repeating-conic-gradient(#fff 0 25%, #d8d5d1 0 50%) 0 0 / 2px 2px; }
    .bevel { background: var(--face); border: solid; border-width: 1px 2px 3px 1px; border-color: #fff #6b6866 #6b6866 #fff; }
    .scroll button { height: 26px; }
    .scroll button ide-icon { width: 10px; height: 11px; }
    .thumb { flex: 1; margin-bottom: 78px; }

    .editor { display: flex; flex-direction: column; min-width: 0; min-height: 0; }
    .docs { display: flex; align-items: flex-end; flex: none; height: 34px; margin-bottom: -1px; padding-right: 5px; z-index: 1; }
    .doc { position: relative; height: 26px; padding: 2px 9px 0; margin-left: 1px; border: 1px solid var(--edge); border-radius: 10px 4px 0 0; background: #d6d3d0; }
    .doc.front { height: 30px; width: 202px; padding: 0 6px 0 22px; margin: 0; border: 0; background: none; }
    .doc.front svg { position: absolute; inset: 0; width: 100%; height: 100%; }
    .doc.front span { position: relative; }
    .docs .push { margin-left: auto; }
    .docs .act { width: 23px; height: 30px; }
    .docs .act ide-icon { width: 14px; height: 15px; }
    .docs .act .mini { width: 12px; height: 9px; }
    .frame { flex: 1; min-height: 0; display: flex; flex-direction: column; padding: 7px 5px 0 4px; border: solid var(--edge); border-width: 1px 1px 0; border-radius: 4px 4px 0 0; background: #d6d3d2; }
    .inner { flex: 1; min-height: 0; display: flex; flex-direction: column; border: solid var(--edge); border-width: 1px 1px 0; background: #fff; }
    .views { display: flex; flex: none; height: 44px; padding: 6px 0 0 6px; border-bottom: 2px solid #111; }
    .views button { height: 36px; gap: 8px; padding: 0 8px 3px 5px; border-right: 2px solid #111; }
    .views button:last-child { border: 0; }
    .views button.on { gap: 9px; padding: 0 9px 3px 3px; border: solid #111; border-width: 2px 2px 0; border-radius: 4px 5px 0 0; background: #dad7d3; }
    .canvas { flex: 1; min-height: 0; display: flex; align-items: center; justify-content: center; padding-bottom: 152px; text-align: center; font-size: 16px; color: #86857f; background: var(--cream); border-top: 7px solid #dcd9d5; }
    .split { flex: none; height: 10px; border: solid; border-width: 3px 0 1px; border-color: #6d6b62 transparent #fff; background: var(--face); background-clip: padding-box; }
    .managers { flex: none; background: var(--face); }
    .mtabs { display: flex; height: 36px; border-bottom: 2px solid #fbfaf8; }
    .mtabs button { gap: 8px; padding: 0 5px 0 10px; border-right: 2px solid #4c4a48; background: #dad7d4; border-radius: 0 3px 0 0; }
    .drop-area { height: 80px; margin: 2px 6px 0; padding-top: 38px; text-align: center; border: solid #4c4a5c; border-width: 3px 2px 0; border-right-color: #f5f4f2; background: var(--cream); }

    .side { display: flex; flex-direction: column; gap: 8px; min-width: 0; min-height: 0; padding-top: 1px; }
    .pane { min-height: 0; display: flex; flex-direction: column; border-left: 1px solid var(--edge); background: #fff; overflow: hidden; }
    .solution { flex: 817 1 0; border-bottom: 1px solid var(--edge); }
    .props { flex: 665 1 0; }
    .pane .title { height: 27px; padding-left: 4px; }
    .solution .title { color: #fff; background: var(--navy); }
    .bar { display: flex; align-items: center; flex: none; height: 45px; padding-left: 4px; border-bottom: 1px solid var(--edge); background: linear-gradient(#f6f5f6, #eeecea 50%, #d6d3cf); }
    .bar .tool { height: 37px; }
    .bar .rule { height: 28px; width: 1px; margin: 0 3px; }
    .tree { padding: 2px 0 0 9px; }
    .node { display: flex; align-items: center; height: 27px; white-space: nowrap; }
    .node.root { gap: 6px; padding-left: 5px; }
    .guide { flex: none; width: 30px; height: 27px; }
    .guide.inner-guide { width: 26px; }
    .node a { color: inherit; text-decoration: none; margin-left: 4px; padding: 2px; }
    .node a.sel { color: #fff; background: var(--navy); }
    .object { flex: none; height: 36px; padding: 5px 0 0 4px; border: solid var(--face); border-width: 7px 0 5px; box-sizing: content-box; height: 29px; }
    .bar.sort { height: 43px; padding-left: 2px; }
    .sort .cat { width: 32px; border: 1px solid var(--navy); background: #b9c8e4; }
    .az { width: 24px; height: 34px; margin: 0 4px 0 2px; }
    .az span { display: flex; flex-direction: column; font: 14px/13px 'Liberation Serif', serif; }
    .az span span { color: #b02a2a; }
    .az > span { color: #2a4cc0; }
    .az ide-icon { width: 12px; }
    table { border-collapse: collapse; table-layout: fixed; width: 100%; flex: none; }
    td, th { padding: 0; height: 29px; font-weight: 400; text-align: left; white-space: nowrap; overflow: hidden; }
    .gutter { width: 18px; background: var(--face); }
    .name { width: 247px; padding-left: 5px; }
    .cat-row th { height: 31px; background: var(--face); }
    .cat-row b { color: #8a8a88; padding-left: 5px; }
    .cat-row button { width: 12px; height: 16px; margin-left: 2px; border: 2px solid #222; }
    .cat-row button::before { content: ''; width: 6px; height: 2px; background: #222; }
    .current th { background: var(--face); }
    td { padding-left: 3px; border-left: 1px solid var(--face); }
    .path { color: #8a8a88; border-bottom: 1px solid var(--face); }
    .path td { border-top: 1px solid var(--face); }
    .fill { flex: 1; border-bottom: 1px solid var(--edge); }
    .help { flex: none; height: 66px; padding: 5px 0 0 5px; border-top: 7px solid var(--face); background: linear-gradient(var(--edge) 0 1px, var(--face) 1px); background-clip: padding-box; }
    .help p { line-height: 27px; }
  `;

  private tool(icon: string, label: string) {
    return html`<button class="tool" aria-label=${label}><ide-icon name=${icon}></ide-icon></button>`;
  }

  private drop(label: string, dim = false) {
    return html`<button class=${classMap({ drop: true, dim })} aria-label=${label}><ide-icon name="caret"></ide-icon></button>`;
  }

  private toolbar() {
    return html`<header class="toolbar">
      <div class="strip">
        <span class="grip"></span>
        ${this.tool('newProject', 'New Project')}${this.drop('New Project options')}
        ${this.tool('save', 'Save')}${this.tool('saveAll', 'Save All')}
        <span class="rule"></span>
        ${this.tool('cut', 'Cut')}${this.tool('copy', 'Copy')}${this.tool('paste', 'Paste')}
        <span class="rule"></span>
        ${this.tool('undo', 'Undo')}${this.drop('Undo history', true)}
        ${this.tool('redo', 'Redo')}${this.drop('Redo history', true)}
        <span class="rule wide"></span>
        ${this.tool('play', 'Start Debugging')}
        <span class="rule"></span>
        <div class="combo">
          <select aria-label="Solution Configurations"><option>Development</option></select>
          <span><ide-icon class="mini" name="caret"></ide-icon></span>
        </div>
        <span class="rule"></span>
        <div class="windows">
          ${this.tool('find', 'Solution Explorer')}${this.tool('properties', 'Properties Window')}
          ${this.tool('tools', 'Toolbox')}${this.tool('objects', 'Start Page')}${this.tool('command', 'Command Window')}
          ${this.drop('Other windows')}
        </div>
      </div>
      <button class="more" aria-label="Toolbar Options"><i></i><ide-icon class="mini" name="caret"></ide-icon></button>
    </header>`;
  }

  private toolbox() {
    return html`<section class="toolbox" aria-label="Toolbox">
      <div class="title">
        <h2>Toolbox</h2>
        <button aria-label="Window Position"><ide-icon class="mini" name="caret"></ide-icon></button>
        <button aria-label="Auto Hide"><ide-icon name="pin"></ide-icon></button>
        <button aria-label="Close Toolbox"><ide-icon name="close"></ide-icon></button>
      </div>
      <div class="body">
        <div class="palette">
          ${groups.map((g, gi) => html`
            <h3 class="group"><button aria-expanded="true"><span class="minus"></span><b>${g.title}</b></button></h3>
            <ul>
              ${g.items.map(([icon, label], i) => {
                const id = `${gi}-${i}`;
                return html`<li><button class=${classMap({ item: true, picked: this.picked === id })}
                  @click=${() => (this.picked = id)}><ide-icon name=${icon}></ide-icon>${label}</button></li>`;
              })}
            </ul>`)}
        </div>
        <div class="scroll">
          <button class="bevel" aria-label="Scroll up"><ide-icon name="up"></ide-icon></button>
          <div class="bevel thumb"></div>
        </div>
      </div>
    </section>`;
  }

  private editor() {
    return html`<main class="editor">
      <div class="docs">
        <button class="doc front">
          <svg viewBox="0 0 202 30" preserveAspectRatio="none" aria-hidden="true">
            <path d="M0 30Q3 29 6 24L20 5Q24 .5 29 .5H197Q201.5 .5 201.5 5V30" fill="#eeecec" stroke="#8a8687"/>
          </svg>
          <span class="strong">Package.dtsx [Design]</span>
        </button>
        <button class="doc">Start Page</button>
        <button class="act push" aria-label="Active Files"><ide-icon class="mini" name="caret"></ide-icon></button>
        <button class="act" aria-label="Close"><ide-icon name="close"></ide-icon></button>
      </div>
      <div class="frame">
        <div class="inner">
          <nav class="views">
            ${views.map(([icon, label], i) => html`<button class=${classMap({ on: this.view === i })}
              @click=${() => (this.view = i)}><ide-icon name=${icon}></ide-icon>${label}</button>`)}
          </nav>
          <div class="canvas"><p>To build the control flow in the package, drag objects from Control Flow Items in the Toolbox to the designer surface<br>and then connect the objects by selecting them and dragging their connections to another object.<br>To edit objects, double-click them.<br>To extract, transform, and load data, add a Data Flow task and build its data flow.</p></div>
          <div class="split"></div>
          <section class="managers">
            <div class="mtabs"><button><ide-icon name="connection"></ide-icon>Connection Managers</button></div>
            <div class="drop-area">Right-click here to add a new connection manager to the SSIS package.</div>
          </section>
        </div>
      </div>
    </main>`;
  }

  private side() {
    return html`<aside class="side">
      <section class="pane solution">
        <div class="title"><h2>Solution Explorer</h2></div>
        <div class="bar">
          ${this.tool('solProps', 'Properties')}<span class="rule"></span>${this.tool('solFiles', 'Show All Files')}
        </div>
        <ul class="tree">
          <li class="node root"><ide-icon name="project"></ide-icon><b>Integration Services Project1</b></li>
          <li class="node">${guide('tee')}<ide-icon name="folder"></ide-icon><a href="#sources">Data Sources</a></li>
          <li class="node">${guide('tee')}<ide-icon name="folder"></ide-icon><a href="#views">Data Source Views</a></li>
          <li class="node">${guide('open')}<ide-icon name="folder"></ide-icon><a href="#packages">SSIS Packages</a></li>
          <li class="node">
            <svg class="guide" viewBox="0 0 30 27" aria-hidden="true"><path d="M6.5 0V27" stroke="#6c6c6c" stroke-dasharray="1 2"/></svg>
            <svg class="guide inner-guide" viewBox="5 0 26 27" aria-hidden="true"><path d="M6.5 0V14M7 13.5H21" fill="none" stroke="#6c6c6c" stroke-dasharray="1 2"/></svg>
            <ide-icon name="package"></ide-icon><a class="sel" href="#package">Package.dtsx</a>
          </li>
          <li class="node">${guide('end')}<ide-icon name="folder"></ide-icon><a href="#misc">Miscellaneous</a></li>
        </ul>
      </section>
      <section class="pane props">
        <div class="title"><h2>Properties</h2></div>
        <div class="object"><b>Package.dtsx</b></div>
        <div class="bar sort">
          <button class="tool cat" aria-label="Categorized"><ide-icon name="categories"></ide-icon></button>
          <button class="az" aria-label="Alphabetical"><span>A<span>Z</span></span><ide-icon name="sortArrow"></ide-icon></button>
          <span class="rule"></span>
          ${this.tool('propPages', 'Property Pages')}
        </div>
        <table>
          <colgroup><col style="width:18px"><col style="width:247px"><col></colgroup>
          <tbody>
            <tr class="cat-row"><th class="gutter"><button aria-label="Collapse Location"></button></th><th colspan="2"><b>Location</b></th></tr>
            <tr class="current"><th class="gutter"></th><th class="name">File Name</th><td><b>Package.dtsx</b></td></tr>
            <tr class="path"><th class="gutter"></th><th class="name">Full Path</th><td>C:\\Users</td></tr>
          </tbody>
        </table>
        <div class="fill"></div>
        <div class="help"><p><b>File Name</b></p><p>File Name</p></div>
      </section>
    </aside>`;
  }

  render() {
    return html`<div class="shell">
      ${this.toolbar()}
      <div class="main">${this.toolbox()}${this.editor()}${this.side()}</div>
    </div>`;
  }
}
